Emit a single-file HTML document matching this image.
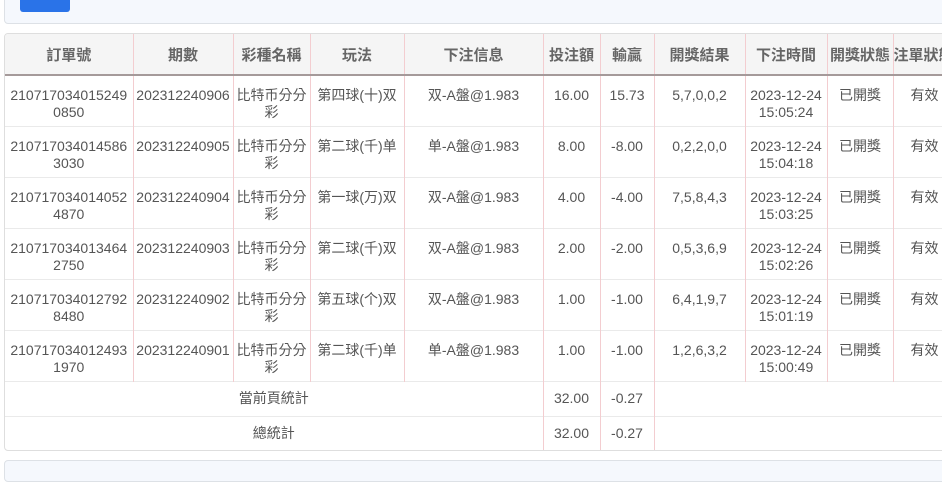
<!DOCTYPE html>
<html><head><meta charset="utf-8"><style>
html,body{margin:0;padding:0;width:942px;height:468px;overflow:hidden;background:#fff;font-family:"Liberation Sans","Noto Sans CJK TC",sans-serif;color:#555;}
.top{position:absolute;left:4px;top:-10px;width:960px;height:32px;background:#f5f8fd;border:1px solid #dde1e6;border-radius:4px;}
.btn{position:absolute;left:20px;top:-8px;width:50px;height:20px;background:#2a73e8;border-radius:3px;}
.wrap{position:absolute;left:4px;top:33px;border:1px solid #dedede;border-radius:4px;overflow:hidden;width:990px;height:416px;}
table{border-collapse:collapse;table-layout:fixed;font-size:14px;}
th{background:#f5f5f5;height:40px;font-weight:bold;font-size:15px;color:#666;border-bottom:2px solid #a59a9a;border-right:1px solid #f3cdd0;padding:0;white-space:nowrap;overflow:hidden;}
td{height:50px;border-top:1px solid #eaeaea;border-right:1px solid #f3cdd0;text-align:center;vertical-align:top;padding:11px 0 0 0;line-height:17px;box-sizing:border-box;word-break:break-all;}
tr.r td{height:51px;}
tr.s td{height:35px;vertical-align:middle;padding:0;}
tr:nth-child(2) td{border-top:none;}
</style></head><body>
<div class="top"></div><div class="btn"></div>
<div class="wrap"><table>
<colgroup><col style="width:128px"><col style="width:100px"><col style="width:77px"><col style="width:94px"><col style="width:139px"><col style="width:57px"><col style="width:54px"><col style="width:91px"><col style="width:82px"><col style="width:66px"><col style="width:70px"></colgroup>
<tr><th>訂單號</th><th>期數</th><th>彩種名稱</th><th>玩法</th><th>下注信息</th><th>投注額</th><th>輸贏</th><th>開獎結果</th><th>下注時間</th><th>開獎狀態</th><th style="text-align:left">注單狀態</th></tr>
<tr class="r"><td>210717034015249<br>0850</td><td>202312240906</td><td>比特币分分<br>彩</td><td>第四球(十)双</td><td>双-A盤@1.983</td><td>16.00</td><td>15.73</td><td>5,7,0,0,2</td><td>2023-12-24<br>15:05:24</td><td>已開獎</td><td style="text-align:left;padding-left:17px">有效</td></tr>
<tr class="r"><td>210717034014586<br>3030</td><td>202312240905</td><td>比特币分分<br>彩</td><td>第二球(千)单</td><td>单-A盤@1.983</td><td>8.00</td><td>-8.00</td><td>0,2,2,0,0</td><td>2023-12-24<br>15:04:18</td><td>已開獎</td><td style="text-align:left;padding-left:17px">有效</td></tr>
<tr class="r"><td>210717034014052<br>4870</td><td>202312240904</td><td>比特币分分<br>彩</td><td>第一球(万)双</td><td>双-A盤@1.983</td><td>4.00</td><td>-4.00</td><td>7,5,8,4,3</td><td>2023-12-24<br>15:03:25</td><td>已開獎</td><td style="text-align:left;padding-left:17px">有效</td></tr>
<tr class="r"><td>210717034013464<br>2750</td><td>202312240903</td><td>比特币分分<br>彩</td><td>第二球(千)双</td><td>双-A盤@1.983</td><td>2.00</td><td>-2.00</td><td>0,5,3,6,9</td><td>2023-12-24<br>15:02:26</td><td>已開獎</td><td style="text-align:left;padding-left:17px">有效</td></tr>
<tr class="r"><td>210717034012792<br>8480</td><td>202312240902</td><td>比特币分分<br>彩</td><td>第五球(个)双</td><td>双-A盤@1.983</td><td>1.00</td><td>-1.00</td><td>6,4,1,9,7</td><td>2023-12-24<br>15:01:19</td><td>已開獎</td><td style="text-align:left;padding-left:17px">有效</td></tr>
<tr class="r"><td>210717034012493<br>1970</td><td>202312240901</td><td>比特币分分<br>彩</td><td>第二球(千)单</td><td>单-A盤@1.983</td><td>1.00</td><td>-1.00</td><td>1,2,6,3,2</td><td>2023-12-24<br>15:00:49</td><td>已開獎</td><td style="text-align:left;padding-left:17px">有效</td></tr>
<tr class="s"><td colspan="5">當前頁統計</td><td>32.00</td><td>-0.27</td><td colspan="4" style="border-right:none"></td></tr>
<tr class="s"><td colspan="5">總統計</td><td>32.00</td><td>-0.27</td><td colspan="4" style="border-right:none"></td></tr>
</table></div>
<div style="position:absolute;left:4px;top:460px;width:960px;height:20px;background:#f5f8fd;border:1px solid #dde1e6;border-radius:4px;"></div>
</body></html>
